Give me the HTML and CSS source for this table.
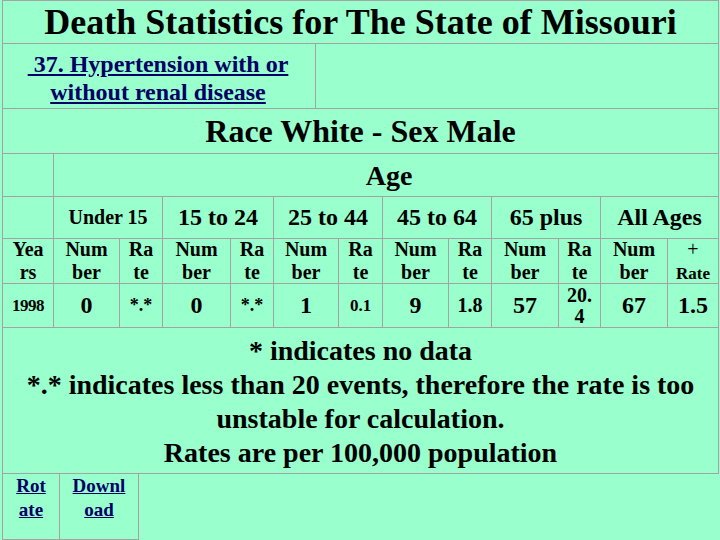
FILE: index.html
```html
<!DOCTYPE html>
<html>
<head>
<meta charset="utf-8">
<title>Death Statistics for The State of Missouri</title>
<link rel="stylesheet" href="styles.css">
</head>
<body>
<div class="sheet">
  <div class="row title">Death Statistics for The State of Missouri</div>
  <div class="row split">
    <div class="cell link-cell"><a href="#" class="cause">&nbsp;37. Hypertension with or without renal disease</a></div>
    <div class="cell filler"></div>
  </div>
  <div class="row race">Race White - Sex Male</div>
  <div class="stats">
    <div class="c blank"></div>
    <div class="c age">Age</div>

    <div class="c blank"></div>
    <div class="c grp small">Under 15</div>
    <div class="c grp">15 to 24</div>
    <div class="c grp">25 to 44</div>
    <div class="c grp">45 to 64</div>
    <div class="c grp">65 plus</div>
    <div class="c grp">All Ages</div>

    <div class="c hd">Yea<br>rs</div>
    <div class="c hd">Num<br>ber</div>
    <div class="c hd">Ra<br>te</div>
    <div class="c hd">Num<br>ber</div>
    <div class="c hd">Ra<br>te</div>
    <div class="c hd">Num<br>ber</div>
    <div class="c hd">Ra<br>te</div>
    <div class="c hd">Num<br>ber</div>
    <div class="c hd">Ra<br>te</div>
    <div class="c hd">Num<br>ber</div>
    <div class="c hd">Ra<br>te</div>
    <div class="c hd">Num<br>ber</div>
    <div class="c hd plus"><div><span class="plus-sign">+</span><br><span class="rate-word">Rate</span></div></div>

    <div class="c yr">1998</div>
    <div class="c num">0</div>
    <div class="c star">*.*</div>
    <div class="c num">0</div>
    <div class="c star">*.*</div>
    <div class="c num">1</div>
    <div class="c rt-s">0.1</div>
    <div class="c num">9</div>
    <div class="c rt-m">1.8</div>
    <div class="c num">57</div>
    <div class="c rt-m two"><div>20.<br>4</div></div>
    <div class="c num">67</div>
    <div class="c num">1.5</div>
  </div>
  <div class="row notes">
    <p>* indicates no data<br>*.* indicates less than 20 events, therefore the rate is too unstable for calculation.<br>Rates are per 100,000 population</p>
  </div>
</div>
<div class="tools">
  <div class="tool rot"><a href="#">Rot<br>ate</a></div>
  <div class="tool dl"><a href="#">Downl<br>oad</a></div>
</div>
</body>
</html>
```
FILE: styles.css
```css
html, body {
  margin: 0;
  padding: 0;
  background: #99ffcc;
}
body {
  font-family: "Liberation Serif", Tinos, "Times New Roman", serif;
  font-weight: bold;
  color: #000;
  overflow: hidden;
}
a {
  color: #000066;
  text-decoration: underline;
}
.sheet {
  box-sizing: border-box;
  width: 717px;
  margin-left: 2px;
  padding: 1px;
  background: #a3a3a3;
  display: flex;
  flex-direction: column;
  gap: 1px;
}
.row {
  background: #99ffcc;
  display: flex;
  align-items: center;
  justify-content: center;
  text-align: center;
}
.title {
  height: 42px;
  font-size: 36px;
}
.split {
  height: 64px;
  gap: 1px;
  background: #a3a3a3;
  align-items: stretch;
}
.cell {
  background: #99ffcc;
}
.link-cell {
  width: 312px;
  display: flex;
  align-items: center;
  justify-content: center;
  text-align: center;
  font-size: 24px;
  line-height: 28px;
  padding: 4px 14px 0 12px;
  box-sizing: border-box;
}
.filler {
  flex: 1;
}
.race {
  height: 44px;
  font-size: 32px;
}
.stats {
  display: grid;
  grid-template-columns: 50px 65px 42px 67px 42px 64px 43px 65px 42px 66px 41px 66px 50px;
  grid-template-rows: 42px 41px 44px 43px;
  gap: 1px;
}
.c {
  background: #99ffcc;
  display: flex;
  align-items: center;
  justify-content: center;
  text-align: center;
  font-size: 20px;
  line-height: 23px;
}
.age {
  grid-column: 2 / span 12;
  font-size: 28px;
  padding-left: 6px;
}
.grp {
  grid-column: span 2;
  font-size: 24px;
}
.grp.small {
  font-size: 20px;
}
.hd {
  font-size: 20px;
  line-height: 23px;
}
.plus .plus-sign {
  font-weight: normal;
  font-size: 20px;
}
.plus .rate-word {
  font-size: 17px;
}
.yr {
  font-size: 17px;
  letter-spacing: -0.5px;
}
.num {
  font-size: 24px;
}
.star {
  font-size: 18px;
}
.rt-s {
  font-size: 17px;
}
.rt-m {
  font-size: 20px;
}
.two {
  line-height: 21px;
}
.notes {
  height: 145px;
  font-size: 28px;
}
.notes p {
  margin: 0;
  line-height: 34px;
  padding-top: 3px;
}
.tools {
  display: inline-flex;
  margin-left: 2px;
  background: #a3a3a3;
  padding: 0 1px 1px;
  gap: 1px;
}
.tool {
  background: #99ffcc;
  height: 65px;
  display: flex;
  align-items: flex-start;
  justify-content: center;
  text-align: center;
  font-size: 19px;
  line-height: 24px;
  padding-top: 0;
  box-sizing: border-box;
}
.rot {
  width: 56px;
}
.dl {
  width: 78px;
}
```
